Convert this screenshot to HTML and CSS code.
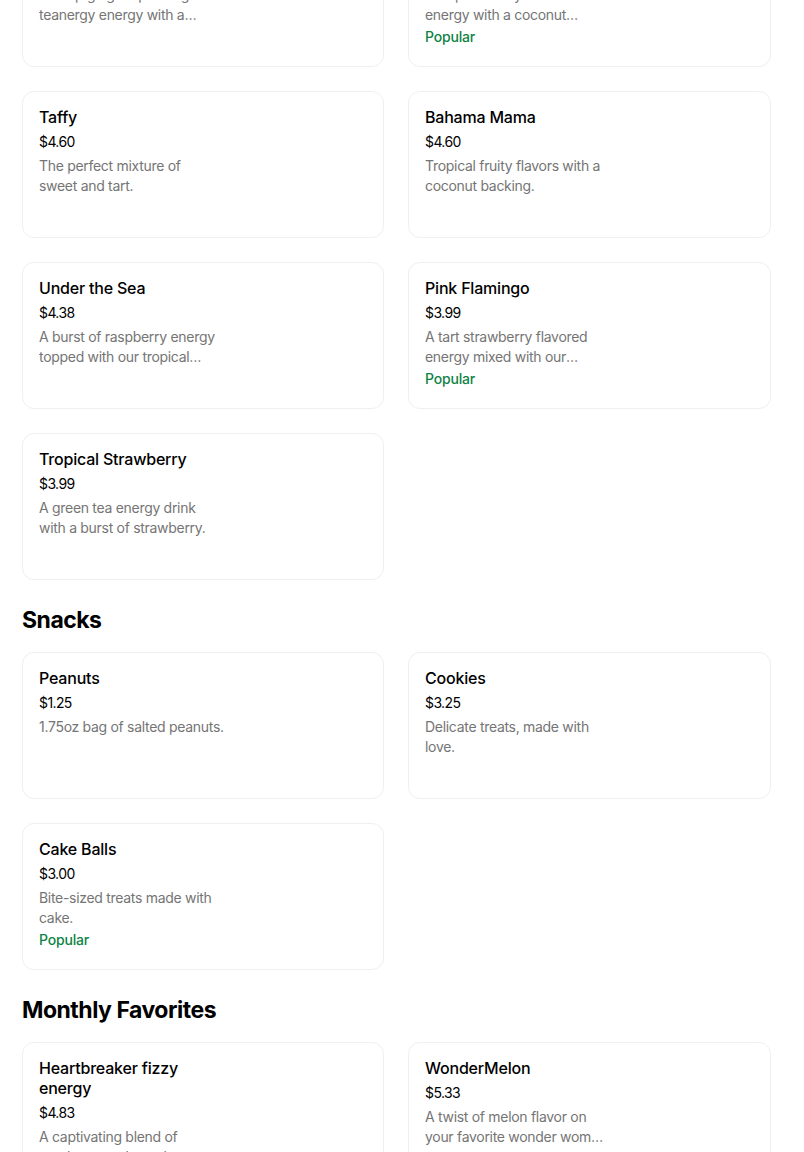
FILE: index.html
```html
<!DOCTYPE html>
<html lang="en">
<head>
<meta charset="utf-8">
<title>Menu</title>
<link rel="stylesheet" href="styles.css">
</head>
<body>
<main class="menu">
  <section class="section">
    <div class="grid">
      <div class="card">
        <div class="info">
          <div class="title">Green Tea Fizz</div>
          <div class="price">$4.60</div>
          <div class="desc">A crisp ginger sparkling teanergy energy with a splash of honey and lime.</div>
        </div>
      </div>
      <div class="card">
        <div class="info">
          <div class="title">Island Breeze</div>
          <div class="price">$4.60</div>
          <div class="desc">A tropical fruity blend of energy with a coconut finish.</div>
          <div class="popular">Popular</div>
        </div>
      </div>
      <div class="card">
        <div class="info">
          <div class="title">Taffy</div>
          <div class="price">$4.60</div>
          <div class="desc">The perfect mixture of sweet and tart.</div>
        </div>
      </div>
      <div class="card">
        <div class="info">
          <div class="title">Bahama Mama</div>
          <div class="price">$4.60</div>
          <div class="desc">Tropical fruity flavors with a coconut backing.</div>
        </div>
      </div>
      <div class="card">
        <div class="info">
          <div class="title">Under the Sea</div>
          <div class="price">$4.38</div>
          <div class="desc">A burst of raspberry energy topped with our tropical coconut cream.</div>
        </div>
      </div>
      <div class="card">
        <div class="info">
          <div class="title">Pink Flamingo</div>
          <div class="price">$3.99</div>
          <div class="desc">A tart strawberry flavored energy mixed with our coconut cream.</div>
          <div class="popular">Popular</div>
        </div>
      </div>
      <div class="card">
        <div class="info">
          <div class="title">Tropical Strawberry</div>
          <div class="price">$3.99</div>
          <div class="desc">A green tea energy drink with a burst of strawberry.</div>
        </div>
      </div>
    </div>
  </section>

  <section class="section">
    <h2 class="heading">Snacks</h2>
    <div class="grid">
      <div class="card">
        <div class="info">
          <div class="title">Peanuts</div>
          <div class="price">$1.25</div>
          <div class="desc desc-oneline">1.75oz bag of salted peanuts.</div>
        </div>
      </div>
      <div class="card">
        <div class="info">
          <div class="title">Cookies</div>
          <div class="price">$3.25</div>
          <div class="desc">Delicate treats, made with love.</div>
        </div>
      </div>
      <div class="card">
        <div class="info">
          <div class="title">Cake Balls</div>
          <div class="price">$3.00</div>
          <div class="desc">Bite-sized treats made with cake.</div>
          <div class="popular">Popular</div>
        </div>
      </div>
    </div>
  </section>

  <section class="section">
    <h2 class="heading">Monthly Favorites</h2>
    <div class="grid">
      <div class="card">
        <div class="info">
          <div class="title">Heartbreaker fizzy energy</div>
          <div class="price">$4.83</div>
          <div class="desc">A captivating blend of raspberry and peach energy with a fizzy twist.</div>
        </div>
      </div>
      <div class="card">
        <div class="info">
          <div class="title">WonderMelon</div>
          <div class="price">$5.33</div>
          <div class="desc">A twist of melon flavor on your favorite wonder woman energy.</div>
        </div>
      </div>
    </div>
  </section>
</main>
</body>
</html>
```

FILE: styles.css
```css
* { box-sizing: border-box; }
html, body { margin: 0; padding: 0; background: #fff; }
body {
  font-family: Inter, "Liberation Sans", Arial, sans-serif;
  color: #000;
  overflow: hidden;
}
.menu {
  width: 749px;
  margin-left: 22px;
  margin-top: -80px;
}
.section { margin-bottom: 24px; }
.heading {
  margin: 0 0 16px 0;
  font-size: 23px;
  line-height: 32px;
  font-weight: 700;
  letter-spacing: -0.5px;
}
.grid {
  display: grid;
  grid-template-columns: 362px 363px;
  column-gap: 24px;
  row-gap: 24px;
}
.card {
  height: 147px;
  border: 1px solid #efefef;
  border-radius: 12px;
  padding: 15px 16px 16px;
  display: flex;
}
.info {
  width: 182px;
  display: flex;
  flex-direction: column;
}
.title {
  font-size: 16px;
  line-height: 20px;
  font-weight: 500;
  letter-spacing: -0.2px;
}
.price {
  margin-top: 5px;
  font-size: 14px;
  line-height: 20px;
  letter-spacing: -0.6px;
}
.desc {
  margin-top: 4px;
  font-size: 14px;
  line-height: 20px;
  letter-spacing: -0.3px;
  color: #757575;
  display: -webkit-box;
  -webkit-line-clamp: 2;
  -webkit-box-orient: vertical;
  overflow: hidden;
}
.desc-oneline {
  white-space: nowrap;
  overflow: visible;
}
.popular {
  margin-top: 2px;
  font-size: 14px;
  line-height: 20px;
  font-weight: 500;
  letter-spacing: -0.2px;
  color: #0e8345;
}
```
